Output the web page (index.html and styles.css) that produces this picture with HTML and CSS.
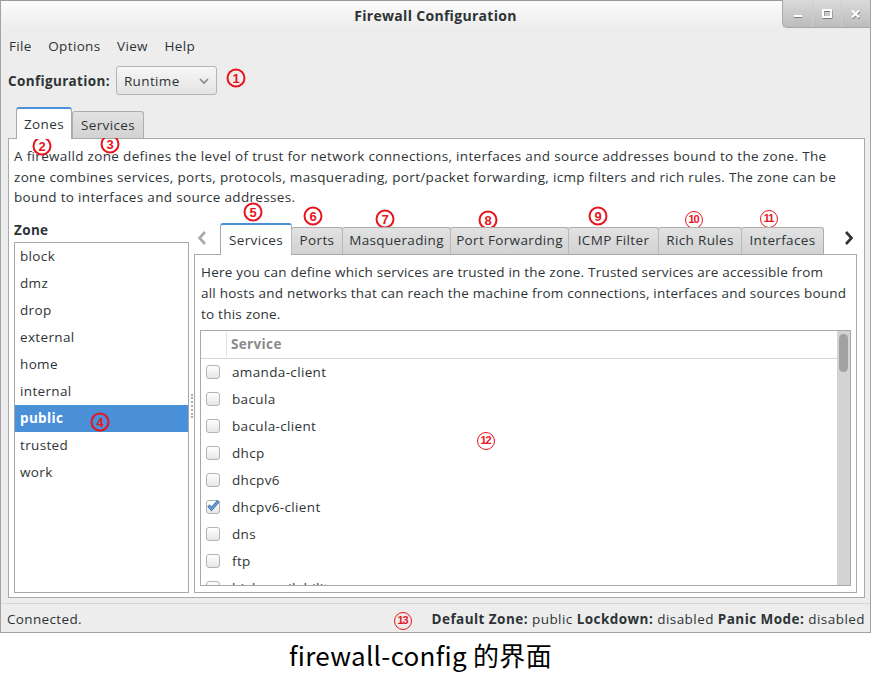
FILE: index.html
```html
<!DOCTYPE html>
<html>
<head>
<meta charset="utf-8">
<title>Firewall Configuration</title>
<link rel="stylesheet" href="styles.css">
</head>
<body>
<div class="window">
  <div class="titlebar">
    <div></div>
    <div class="title">Firewall Configuration</div>
    <div class="wbtns">
      <span class="wbtn"><svg width="12" height="12" viewBox="0 0 12 12"><rect x="2" y="8" width="8" height="2" fill="#7a7a7a"/><rect x="2" y="7" width="8" height="2" fill="#fff"/></svg></span>
      <span class="wbtn"><svg width="12" height="12" viewBox="0 0 12 12"><rect x="2.5" y="3" width="8" height="7" fill="none" stroke="#7a7a7a" stroke-width="2"/><rect x="2" y="2" width="8" height="7" fill="none" stroke="#fff" stroke-width="2"/></svg></span>
      <span class="wbtn"><svg width="12" height="12" viewBox="0 0 12 12"><path d="M2.5 3.5l7 7M9.5 3.5l-7 7" stroke="#7a7a7a" stroke-width="2.2"/><path d="M2 2.5l7 7M9 2.5l-7 7" stroke="#fff" stroke-width="2.2"/></svg></span>
    </div>
  </div>

  <div class="menubar">
    <span>File</span><span>Options</span><span>View</span><span>Help</span>
  </div>

  <div class="configrow">
    <span class="clabel">Configuration:</span>
    <div class="combo">
      <span>Runtime</span>
      <svg width="10" height="8" viewBox="0 0 10 8"><path d="M1 2l4 4 4-4" fill="none" stroke="#888" stroke-width="1.6"/></svg>
    </div>
  </div>

  <div class="otabs">
    <div class="otab active">Zones</div>
    <div class="otab">Services</div>
  </div>

  <div class="panel">
    <p class="desc">
      <span>A firewalld zone defines the level of trust for network connections, interfaces and source addresses bound to the zone. The</span>
      <span>zone combines services, ports, protocols, masquerading, port/packet forwarding, icmp filters and rich rules. The zone can be</span>
      <span>bound to interfaces and source addresses.</span>
    </p>
    <div class="split">
      <div class="zonecol">
        <div class="zlabel">Zone</div>
        <ul class="zlist">
          <li>block</li>
          <li>dmz</li>
          <li>drop</li>
          <li>external</li>
          <li>home</li>
          <li>internal</li>
          <li class="sel">public</li>
          <li>trusted</li>
          <li>work</li>
        </ul>
      </div>
      <div class="grip"><span></span></div>
      <div class="inner">
        <div class="itabrow">
          <div class="arrow left"><svg width="10" height="16" viewBox="0 0 10 16"><path d="M8 2L2.5 8 8 14" fill="none" stroke="#aaa" stroke-width="2.6"/></svg></div>
          <div class="itab active w1">Services</div>
          <div class="itab w2">Ports</div>
          <div class="itab w3">Masquerading</div>
          <div class="itab w4">Port Forwarding</div>
          <div class="itab w5">ICMP Filter</div>
          <div class="itab w6">Rich Rules</div>
          <div class="itab w7">Interfaces</div>
          <div class="spacer"></div>
          <div class="arrow right"><svg width="10" height="16" viewBox="0 0 10 16"><path d="M2 2l5.5 6L2 14" fill="none" stroke="#2e3436" stroke-width="2.6"/></svg></div>
        </div>
        <div class="ipanel">
          <p class="idesc">
            <span>Here you can define which services are trusted in the zone. Trusted services are accessible from</span>
            <span>all hosts and networks that can reach the machine from connections, interfaces and sources bound</span>
            <span>to this zone.</span>
          </p>
          <div class="tree">
            <div class="tmain">
              <div class="thead"><div class="hc1"></div><div class="hc2">Service</div></div>
              <div class="trow"><span class="cb"></span><span>amanda-client</span></div>
              <div class="trow"><span class="cb"></span><span>bacula</span></div>
              <div class="trow"><span class="cb"></span><span>bacula-client</span></div>
              <div class="trow"><span class="cb"></span><span>dhcp</span></div>
              <div class="trow"><span class="cb"></span><span>dhcpv6</span></div>
              <div class="trow"><span class="cb checked"><svg width="15" height="13" viewBox="0 0 15 13"><path d="M2.5 6.5l3 3.5 7-8" fill="none" stroke="#2a5d99" stroke-width="3"/><path d="M2.5 6.5l3 3.5 7-8" fill="none" stroke="#6aa6e6" stroke-width="1.6"/></svg></span><span>dhcpv6-client</span></div>
              <div class="trow"><span class="cb"></span><span>dns</span></div>
              <div class="trow"><span class="cb"></span><span>ftp</span></div>
              <div class="trow"><span class="cb"></span><span>high-availability</span></div>
            </div>
            <div class="scroll"><div class="thumb"></div></div>
          </div>
        </div>
      </div>
    </div>
  </div>

  <div class="statusbar">
    <span>Connected.</span>
    <span class="sright"><b>Default Zone:</b> public <b>Lockdown:</b> disabled <b>Panic Mode:</b> disabled</span>
  </div>

  <span class="ann a1">1</span>
  <span class="ann a2">2</span>
  <span class="ann a3">3</span>
  <span class="ann a4">4</span>
  <span class="ann a5">5</span>
  <span class="ann a6">6</span>
  <span class="ann a7">7</span>
  <span class="ann a8">8</span>
  <span class="ann a9">9</span>
  <span class="ann thin a10">10</span>
  <span class="ann thin a11">11</span>
  <span class="ann thin a12">12</span>
  <span class="ann thin a13">13</span>
</div>
<div class="caption">firewall-config 的界面</div>
</body>
</html>
```

FILE: styles.css
```css
* { box-sizing: border-box; margin: 0; padding: 0; }

body {
  width: 871px;
  height: 676px;
  overflow: hidden;
  background: #ffffff;
  font-family: "Open Sans", "Liberation Sans", sans-serif;
  font-size: 13.5px;
  letter-spacing: 0.35px;
  color: #2e3436;
}

.window {
  position: relative;
  width: 871px;
  height: 633px;
  background: #ededed;
  border: 1px solid #a3a3a3;
  border-top-color: #9a9a9a;
  display: flex;
  flex-direction: column;
}

/* title bar */
.titlebar {
  height: 29px;
  flex: none;
  display: grid;
  grid-template-columns: 1fr auto 1fr;
  background: linear-gradient(#fbfbfb, #ececec);
}
.title {
  font-weight: bold;
  font-size: 14px;
  letter-spacing: 0.3px;
  line-height: 30px;
  color: #2e3436;
}
.wbtns {
  justify-self: end;
  display: flex;
  height: 28px;
  margin-top: -1px;
  border: 1px solid #a8a8a8;
  border-top: none;
  border-right: none;
  border-bottom-left-radius: 5px;
  background: linear-gradient(#dadada, #bcbcbc);
  overflow: hidden;
}
.wbtn {
  width: 29px;
  display: flex;
  align-items: center;
  justify-content: center;
  border-left: 1px solid #cdcdcd;
}
.wbtn:first-child { border-left: none; }

/* menu */
.menubar {
  height: 31px;
  flex: none;
  display: flex;
  align-items: center;
  gap: 16.5px;
  padding-left: 8px;
}

/* configuration row */
.configrow {
  height: 29px;
  flex: none;
  margin-top: 5px;
  display: flex;
  align-items: center;
  gap: 6px;
  padding-left: 7px;
}
.clabel { font-weight: bold; }
.combo {
  width: 101px;
  height: 29px;
  border: 1px solid #b4b4b4;
  border-radius: 3px;
  background: linear-gradient(#f6f6f6, #e4e4e4);
  display: flex;
  align-items: center;
  justify-content: space-between;
  padding: 0 7px 0 7px;
}

/* outer tabs */
.otabs {
  height: 31px;
  flex: none;
  margin-top: 12px;
  display: flex;
  align-items: flex-end;
  padding-left: 15px;
  position: relative;
  z-index: 2;
}
.otab {
  height: 27px;
  border: 1px solid #adadad;
  border-bottom: none;
  border-radius: 3px 3px 0 0;
  background: linear-gradient(#e2e2e2, #d2d2d2);
  display: flex;
  align-items: center;
  justify-content: center;
  width: 72px;
}
.otab.active {
  width: 56px;
  height: 32px;
  margin-bottom: -1px;
  border-color: #a8a8a8;
  border-top: 2px solid #4a90d9;
  background: #ffffff;
}

/* panel */
.panel {
  flex: none;
  margin-left: 7px;
  width: 857px;
  height: 460px;
  border: 1px solid #a9a9a9;
  background: #ffffff;
  padding: 7px 7px 4px 5px;
}
.desc span, .idesc span { display: block; white-space: nowrap; }
.desc { line-height: 20.5px; letter-spacing: 0.33px; }

.split {
  margin-top: 13px;
  display: grid;
  grid-template-columns: 175px 5px 663px;
  height: 372px;
}
.zlabel {
  font-weight: bold;
  height: 18px;
  line-height: 18px;
  margin-bottom: 3px;
}
.zlist {
  list-style: none;
  height: 351px;
  border: 1px solid #a8a8a8;
  background: #fff;
}
.zlist li {
  height: 27px;
  line-height: 26px;
  padding-left: 5px;
}
.zlist li.sel {
  background: #4a90d9;
  color: #ffffff;
  font-weight: bold;
}

.grip {
  display: flex;
  align-items: flex-start;
  justify-content: center;
  padding-top: 173px;
}
.grip span {
  width: 2px;
  height: 24px;
  border-left: 2px dotted #b0b0b0;
}

/* inner notebook */
.inner { margin-top: 2px; display: flex; flex-direction: column; }
.itabrow {
  height: 31px;
  display: flex;
  align-items: flex-end;
  position: relative;
  z-index: 2;
}
.arrow {
  align-self: center;
  display: flex;
  align-items: center;
}
.arrow.left { width: 26px; padding-left: 3px; }
.arrow.right { width: 14px; padding-left: 1px; }
.spacer { flex: 1; }
.itab {
  height: 27px;
  border: 1px solid #adadad;
  border-bottom: none;
  border-left-color: #b9b9b9;
  border-radius: 3px 3px 0 0;
  background: linear-gradient(#e2e2e2, #d2d2d2);
  display: flex;
  align-items: center;
  justify-content: center;
  white-space: nowrap;
  padding-bottom: 1px;
}
.itab + .itab { margin-left: -1px; }
.itab.active {
  height: 32px;
  margin-bottom: -1px;
  border-top: 2px solid #4a90d9;
  border-color: #a8a8a8;
  border-top-color: #4a90d9;
  background: #ffffff;
  padding-bottom: 0;
}
.w1 { width: 72px; }
.w2 { width: 52px; }
.w3 { width: 109px; }
.w4 { width: 119px; }
.w5 { width: 91px; }
.w6 { width: 84px; }
.w7 { width: 83px; }

.ipanel {
  height: 339px;
  border: 1px solid #a9a9a9;
  background: #fff;
  padding: 7px 5px;
}
.idesc { line-height: 21px; padding-left: 1px; letter-spacing: 0.22px; }

.tree {
  margin-top: 5px;
  height: 256px;
  border: 1px solid #a8a8a8;
  display: flex;
  overflow: hidden;
}
.tmain { flex: 1; overflow: hidden; }
.thead {
  height: 28px;
  display: flex;
  border-bottom: 1px solid #d6d6d6;
}
.hc1 {
  width: 26px;
  border-right: 1px solid #e2e2e2;
  margin: 1px 0 1px 0;
}
.hc2 {
  padding-left: 4px;
  line-height: 27px;
  font-weight: bold;
  color: #8a8a8a;
}
.trow {
  height: 27px;
  display: flex;
  align-items: center;
  gap: 12px;
  padding-left: 5px;
}
.cb {
  position: relative;
  width: 14px;
  height: 14px;
  border: 1px solid #b3b3b3;
  border-radius: 3px;
  background: linear-gradient(#ffffff, #e6e6e6);
  flex: none;
}
.cb svg { position: absolute; left: -1px; top: -2px; }

.scroll {
  width: 13px;
  background: #d3d3d3;
  padding: 3px 2px;
}
.thumb {
  height: 38px;
  border-radius: 5px;
  background: #a2a2a2;
}

/* status bar */
.statusbar {
  flex: 1;
  margin-top: 5px;
  border-top: 1px solid #d7d7d7;
  display: flex;
  align-items: center;
  justify-content: space-between;
  padding: 2px 5px 0 6px;
}
.sright { letter-spacing: 0.45px; }

/* annotations */
.ann {
  position: absolute;
  width: 19px;
  height: 19px;
  border: 2px solid #e8141d;
  border-radius: 50%;
  color: #e8141d;
  font-family: "Liberation Sans", sans-serif;
  font-weight: bold;
  font-size: 13px;
  letter-spacing: 0;
  line-height: 15px;
  text-align: center;
  transform: translate(-50%, -50%);
}
.ann.thin {
  width: 18px;
  height: 18px;
  border-width: 1.5px;
  font-size: 11px;
  line-height: 15px;
  letter-spacing: -1px;
  text-indent: -1px;
}
.a1 { left: 235px; top: 77px; }
.a2 { left: 41px; top: 145px; }
.a3 { left: 109px; top: 143px; }
.a4 { left: 99px; top: 421px; }
.a5 { left: 252px; top: 211px; }
.a6 { left: 312px; top: 215px; }
.a7 { left: 384px; top: 218px; }
.a8 { left: 487px; top: 219px; }
.a9 { left: 597px; top: 215px; }
.a10 { left: 693px; top: 219px; }
.a11 { left: 768px; top: 218px; }
.a12 { left: 485px; top: 440px; }
.a13 { left: 402px; top: 620px; }

/* caption */
.caption {
  height: 43px;
  display: flex;
  align-items: center;
  justify-content: center;
  padding-right: 30px;
  font-family: "Noto Sans CJK SC", "Noto Sans", sans-serif;
  font-size: 26px;
  letter-spacing: 0.3px;
  color: #000;
}
```
